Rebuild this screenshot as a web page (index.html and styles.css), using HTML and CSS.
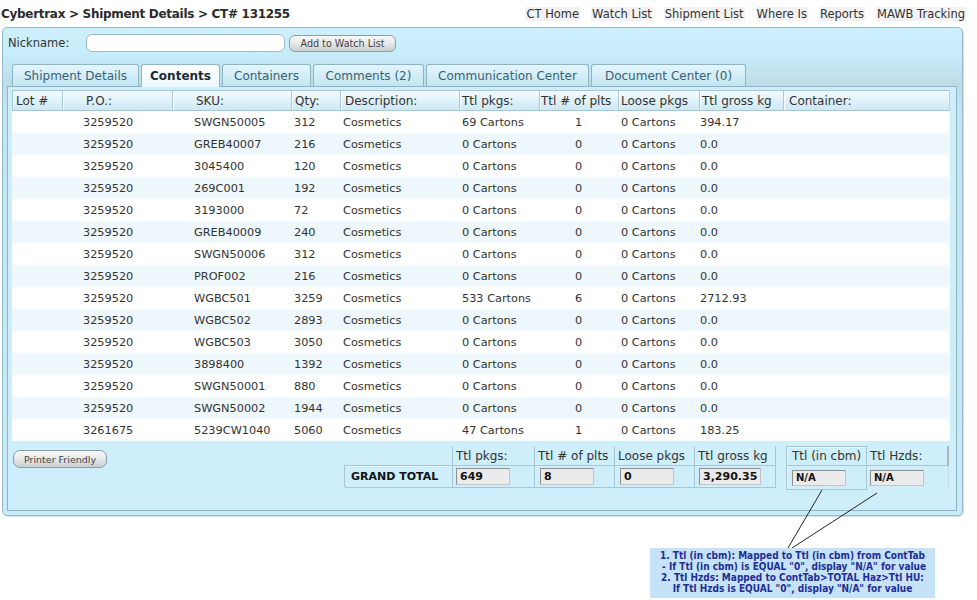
FILE: index.html
```html
<!DOCTYPE html>
<html>
<head>
<meta charset="utf-8">
<link rel="stylesheet" href="styles.css">
</head>
<body>
<div class="topbar">
  <div class="crumb">Cybertrax &gt; Shipment Details &gt; CT# 131255</div>
  <div class="nav">
    <a href="#">CT Home</a>
    <a href="#">Watch List</a>
    <a href="#">Shipment List</a>
    <a href="#">Where Is</a>
    <a href="#">Reports</a>
    <a href="#">MAWB Tracking</a>
  </div>
</div>

<div class="panel">
  <div class="nickrow">
    <div class="nicklabel">Nickname:</div>
    <div class="nickinput"></div>
    <div class="btn btn-watch">Add to Watch List</div>
  </div>

  <div class="tabs">
    <div class="tab t1">Shipment Details</div>
    <div class="tab t2 active">Contents</div>
    <div class="tab t3">Containers</div>
    <div class="tab t4">Comments (2)</div>
    <div class="tab t5">Communication Center</div>
    <div class="tab t6">Document Center (0)</div>
  </div>

  <div class="content">
    <div class="grid">
      <div class="thead">
        <div class="c1">Lot #</div>
        <div class="c2">P.O.:</div>
        <div class="c3">SKU:</div>
        <div class="c4">Qty:</div>
        <div class="c5">Description:</div>
        <div class="c6">Ttl pkgs:</div>
        <div class="c7">Ttl # of plts</div>
        <div class="c8">Loose pkgs</div>
        <div class="c9">Ttl gross kg</div>
        <div class="c10">Container:</div>
      </div>
      <div class="row"><div class="c1"></div><div class="c2">3259520</div><div class="c3">SWGN50005</div><div class="c4">312</div><div class="c5">Cosmetics</div><div class="c6">69 Cartons</div><div class="c7">1</div><div class="c8">0 Cartons</div><div class="c9">394.17</div><div class="c10"></div></div>
      <div class="row"><div class="c1"></div><div class="c2">3259520</div><div class="c3">GREB40007</div><div class="c4">216</div><div class="c5">Cosmetics</div><div class="c6">0 Cartons</div><div class="c7">0</div><div class="c8">0 Cartons</div><div class="c9">0.0</div><div class="c10"></div></div>
      <div class="row"><div class="c1"></div><div class="c2">3259520</div><div class="c3">3045400</div><div class="c4">120</div><div class="c5">Cosmetics</div><div class="c6">0 Cartons</div><div class="c7">0</div><div class="c8">0 Cartons</div><div class="c9">0.0</div><div class="c10"></div></div>
      <div class="row"><div class="c1"></div><div class="c2">3259520</div><div class="c3">269C001</div><div class="c4">192</div><div class="c5">Cosmetics</div><div class="c6">0 Cartons</div><div class="c7">0</div><div class="c8">0 Cartons</div><div class="c9">0.0</div><div class="c10"></div></div>
      <div class="row"><div class="c1"></div><div class="c2">3259520</div><div class="c3">3193000</div><div class="c4">72</div><div class="c5">Cosmetics</div><div class="c6">0 Cartons</div><div class="c7">0</div><div class="c8">0 Cartons</div><div class="c9">0.0</div><div class="c10"></div></div>
      <div class="row"><div class="c1"></div><div class="c2">3259520</div><div class="c3">GREB40009</div><div class="c4">240</div><div class="c5">Cosmetics</div><div class="c6">0 Cartons</div><div class="c7">0</div><div class="c8">0 Cartons</div><div class="c9">0.0</div><div class="c10"></div></div>
      <div class="row"><div class="c1"></div><div class="c2">3259520</div><div class="c3">SWGN50006</div><div class="c4">312</div><div class="c5">Cosmetics</div><div class="c6">0 Cartons</div><div class="c7">0</div><div class="c8">0 Cartons</div><div class="c9">0.0</div><div class="c10"></div></div>
      <div class="row"><div class="c1"></div><div class="c2">3259520</div><div class="c3">PROF002</div><div class="c4">216</div><div class="c5">Cosmetics</div><div class="c6">0 Cartons</div><div class="c7">0</div><div class="c8">0 Cartons</div><div class="c9">0.0</div><div class="c10"></div></div>
      <div class="row"><div class="c1"></div><div class="c2">3259520</div><div class="c3">WGBC501</div><div class="c4">3259</div><div class="c5">Cosmetics</div><div class="c6">533 Cartons</div><div class="c7">6</div><div class="c8">0 Cartons</div><div class="c9">2712.93</div><div class="c10"></div></div>
      <div class="row"><div class="c1"></div><div class="c2">3259520</div><div class="c3">WGBC502</div><div class="c4">2893</div><div class="c5">Cosmetics</div><div class="c6">0 Cartons</div><div class="c7">0</div><div class="c8">0 Cartons</div><div class="c9">0.0</div><div class="c10"></div></div>
      <div class="row"><div class="c1"></div><div class="c2">3259520</div><div class="c3">WGBC503</div><div class="c4">3050</div><div class="c5">Cosmetics</div><div class="c6">0 Cartons</div><div class="c7">0</div><div class="c8">0 Cartons</div><div class="c9">0.0</div><div class="c10"></div></div>
      <div class="row"><div class="c1"></div><div class="c2">3259520</div><div class="c3">3898400</div><div class="c4">1392</div><div class="c5">Cosmetics</div><div class="c6">0 Cartons</div><div class="c7">0</div><div class="c8">0 Cartons</div><div class="c9">0.0</div><div class="c10"></div></div>
      <div class="row"><div class="c1"></div><div class="c2">3259520</div><div class="c3">SWGN50001</div><div class="c4">880</div><div class="c5">Cosmetics</div><div class="c6">0 Cartons</div><div class="c7">0</div><div class="c8">0 Cartons</div><div class="c9">0.0</div><div class="c10"></div></div>
      <div class="row"><div class="c1"></div><div class="c2">3259520</div><div class="c3">SWGN50002</div><div class="c4">1944</div><div class="c5">Cosmetics</div><div class="c6">0 Cartons</div><div class="c7">0</div><div class="c8">0 Cartons</div><div class="c9">0.0</div><div class="c10"></div></div>
      <div class="row"><div class="c1"></div><div class="c2">3261675</div><div class="c3">5239CW1040</div><div class="c4">5060</div><div class="c5">Cosmetics</div><div class="c6">47 Cartons</div><div class="c7">1</div><div class="c8">0 Cartons</div><div class="c9">183.25</div><div class="c10"></div></div>
    </div>

    <div class="foot">
      <div class="btn btn-print">Printer Friendly</div>
      <div class="totals">
        <div class="gt">
          <div class="gh gh-blank"></div>
          <div class="gh">Ttl pkgs:</div>
          <div class="gh">Ttl # of plts</div>
          <div class="gh">Loose pkgs</div>
          <div class="gh gh-last">Ttl gross kg</div>
          <div class="gd gd-label">GRAND TOTAL</div>
          <div class="gd gd-a"><div class="tin w54">649</div></div>
          <div class="gd gd-b"><div class="tin w54">8</div></div>
          <div class="gd gd-b"><div class="tin w54">0</div></div>
          <div class="gd gd-c gd-last"><div class="tin w62">3,290.35</div></div>
        </div>
        <div class="cbm">
          <div class="bh">Ttl (in cbm)</div>
          <div class="bd"><div class="tin na">N/A</div></div>
        </div>
        <div class="hz">
          <div class="bh">Ttl Hzds:</div>
          <div class="bd"><div class="tin na">N/A</div></div>
        </div>
      </div>
    </div>
  </div>
</div>

<svg class="callout-lines" width="977" height="600" viewBox="0 0 977 600">
  <line x1="822" y1="490" x2="788" y2="548" stroke="#222" stroke-width="1"/>
  <line x1="877" y1="493" x2="792" y2="548" stroke="#222" stroke-width="1"/>
</svg>
<div class="note">
  <div>1. Ttl (in cbm): Mapped to Ttl (in cbm) from ContTab</div>
  <div>&nbsp;- If Ttl (in cbm) is EQUAL "0", display "N/A" for value</div>
  <div>2. Ttl Hzds: Mapped to ContTab&gt;TOTAL Haz&gt;Ttl HU:</div>
  <div>If Ttl Hzds is EQUAL "0", display "N/A" for value</div>
</div>
</body>
</html>
```

FILE: styles.css
```css
* { box-sizing: border-box; }
html, body { margin: 0; padding: 0; }
body {
  width: 977px;
  height: 600px;
  position: relative;
  overflow: hidden;
  background: #fff;
  font-family: "DejaVu Sans", Verdana, sans-serif;
  color: #333;
}

/* top bar */
.topbar {
  height: 27px;
  display: flex;
  justify-content: space-between;
  align-items: center;
  padding: 0 11px 0 1px;
}
.crumb {
  font-weight: bold;
  font-size: 12px;
  letter-spacing: -0.3px;
  color: #2b2b2b;
}
.nav { display: flex; gap: 11px; font-size: 11.5px; }
.nav a {
  color: #333;
  text-decoration: none;
  background: #f2f2f2;
  padding: 0 1px;
}

/* panel */
.panel {
  margin-left: 2px;
  width: 961px;
  height: 489px;
  border: 1px solid #93b9ca;
  border-radius: 5px;
  background: linear-gradient(#cdf0fd 0px, #c7ecfa 26px, #bddbe7 58px, #c3e4f1 80px, #c8ebf8 100%);
  box-shadow: 1px 1px 0 #d7e3e8;
}
.nickrow {
  display: flex;
  align-items: center;
  height: 18px;
  margin-top: 6px;
  padding-left: 5px;
}
.nicklabel { width: 78px; font-size: 11.5px; color: #333; }
.nickinput {
  width: 199px;
  height: 18px;
  border: 1px solid #9fb9c6;
  border-radius: 6px;
  background: #fff;
}
.btn {
  display: flex;
  align-items: center;
  justify-content: center;
  border: 1px solid #8e9ca3;
  border-radius: 6px;
  background: linear-gradient(#fafafa, #e4e7e8 50%, #c9cfd2);
  color: #444;
  white-space: nowrap;
}
.btn-watch { margin-left: 4px; width: 107px; height: 17px; font-size: 9.6px; }

/* tabs */
.tabs {
  display: flex;
  gap: 2px;
  height: 22px;
  margin: 12px 0 0 9px;
}
.tab {
  height: 22px;
  display: flex;
  align-items: center;
  justify-content: center;
  border: 1px solid #8fb4c4;
  border-bottom: none;
  border-radius: 3px 3px 0 0;
  background: linear-gradient(#e4f6fd, #c2e5f3);
  font-size: 12px;
  color: #3a6171;
  white-space: nowrap;
}
.tab.active {
  height: 23px;
  margin-bottom: -1px;
  position: relative;
  z-index: 1;
  background: linear-gradient(#fbfeff, #eef9fd);
  font-weight: bold;
  color: #1c2a34;
}
.t1 { width: 127px; }
.t2 { width: 79px; }
.t3 { width: 89px; }
.t4 { width: 111px; }
.t5 { width: 163px; }
.t6 { width: 155px; }

/* content box */
.content {
  margin-left: 4px;
  width: 950px;
  height: 425px;
  border: 1px solid #8fb4c4;
  background: #cdeefa;
  display: flex;
  flex-direction: column;
}
.grid {
  margin: 3px 0 0 4px;
  width: 938px;
  background: #fff;
}
.thead, .row {
  display: grid;
  grid-template-columns: 50px 110px 119px 49px 119px 80px 79px 81px 84px 167px;
  align-items: center;
}
.thead {
  height: 21px;
  border: 1px solid #a3c7d6;
  border-right-color: #b7d3de;
  background: linear-gradient(#f3fbfe, #e2f3fa 45%, #cce8f4);
  font-size: 12px;
  color: #333;
  white-space: nowrap;
}
.thead > div {
  height: 100%;
  display: flex;
  align-items: center;
  border-right: 1px solid #aac8d6;
  box-shadow: inset 1px 0 0 #f6fcff;
}
.thead > div:last-child { border-right: none; }
.thead .c1 { padding-left: 3px; }
.thead .c2 { padding-left: 23px; }
.thead .c3 { padding-left: 23px; }
.thead .c4 { padding-left: 3px; }
.thead .c5 { padding-left: 4px; }
.thead .c6 { padding-left: 2px; }
.thead .c7 { padding-left: 1px; }
.thead .c8 { padding-left: 2px; }
.thead .c9 { padding-left: 2px; }
.thead .c10 { padding-left: 5px; }

.row {
  height: 22px;
  font-size: 11.3px;
  color: #333;
  white-space: nowrap;
}
.row:nth-child(odd) { background: #eef7fb; }
.row .c1 { padding-left: 3px; }
.row .c2 { padding-left: 21px; }
.row .c3 { padding-left: 22px; }
.row .c4 { padding-left: 3px; }
.row .c5 { padding-left: 3px; }
.row .c6 { padding-left: 3px; }
.row .c7 { text-align: center; }
.row .c8 { padding-left: 3px; }
.row .c9 { padding-left: 1px; }

/* footer */
.foot {
  flex: 1;
  display: flex;
  align-items: flex-start;
  background: #cdeefa;
  padding: 0 7px 0 5px;
}
.btn-print {
  margin-top: 9px;
  width: 94px;
  height: 18px;
  font-size: 9.5px;
  border-radius: 7px;
}
.totals {
  margin-top: 5px;
  margin-left: auto;
  display: flex;
  align-items: flex-start;
}
.gt {
  display: grid;
  grid-template-columns: 108px 82px 80px 80px 82px;
  grid-template-rows: 20px 22px;
  width: 432px;
}
.gh {
  display: flex;
  align-items: center;
  padding-left: 3px;
  font-size: 12px;
  color: #333;
  border-left: 1px solid #a8c5d2;
  border-bottom: 1px solid #a8c5d2;
  white-space: nowrap;
}
.gh-blank { border-left: none; }
.gh-last, .gd-last { border-right: 1px solid #a8c5d2; }
.gd {
  display: flex;
  align-items: center;
  border-left: 1px solid #a8c5d2;
  border-bottom: 1px solid #a8c5d2;
}
.gd-label {
  padding-left: 6px;
  font-weight: bold;
  font-size: 11px;
  color: #111;
  border-bottom-left-radius: 3px;
  box-shadow: inset 0 1px 0 #e3f6fd;
}
.gd-a { padding-left: 3px; }
.gd-b { padding-left: 5px; }
.gd-c { padding-left: 4px; }
.tin {
  height: 17px;
  border: 1px solid #8f8f8f;
  border-right-color: #c4c4c4;
  border-bottom-color: #c4c4c4;
  background: #ebebeb;
  font-weight: bold;
  font-size: 11px;
  line-height: 15px;
  padding-left: 3px;
  color: #111;
  white-space: nowrap;
}
.w54 { width: 54px; }
.w62 { width: 62px; }
.na { width: 54px; height: 16px; line-height: 14px; font-size: 10px; }

.cbm {
  margin-left: 10px;
  width: 81px;
  height: 44px;
  border: 1px solid #a8c5d2;
  box-shadow: inset 1px 1px 0 #e6f7fd;
}
.hz {
  width: 82px;
  height: 44px;
}
.bh {
  height: 20px;
  display: flex;
  align-items: center;
  padding-left: 5px;
  font-size: 12px;
  color: #333;
  border-bottom: 1px solid #a8c5d2;
  white-space: nowrap;
}
.cbm .bh { height: 19px; }
.hz .bh { padding-left: 3px; border-right: 2px solid #a9b6bc; }
.bd {
  height: 24px;
  display: flex;
  align-items: center;
  padding-left: 5px;
}
.hz .bd { padding-left: 3px; border-right: 1px solid #c3dbe5; }

/* annotation overlay */
.callout-lines {
  position: absolute;
  left: 0;
  top: 0;
  pointer-events: none;
}
.note {
  position: absolute;
  left: 650px;
  top: 548px;
  width: 285px;
  height: 50px;
  padding-top: 2px;
  background: #c5e2f8;
  font-family: "DejaVu Sans Condensed", "DejaVu Sans", sans-serif;
  font-weight: bold;
  font-size: 10px;
  line-height: 11px;
  color: #1e2e94;
  text-align: center;
  white-space: nowrap;
}
```
